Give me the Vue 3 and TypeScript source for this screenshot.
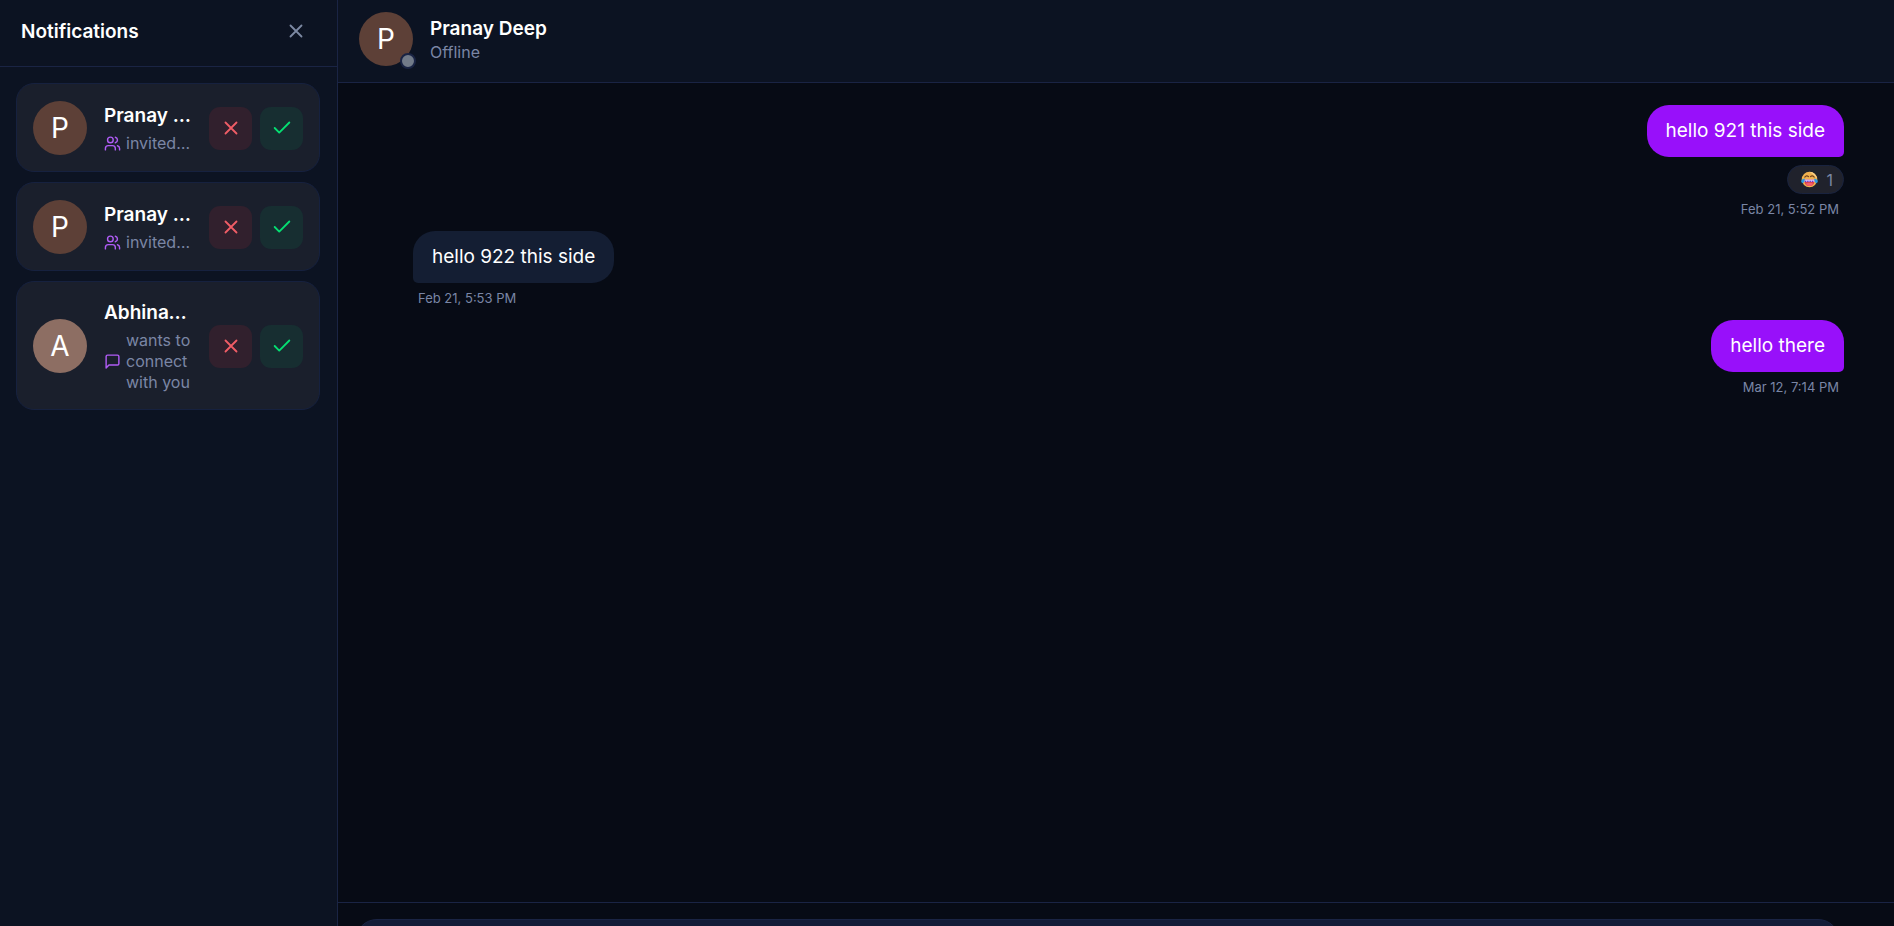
<script setup lang="ts">
import { ref } from 'vue'

interface Invite {
  id: number
  name: string
  text: string
  kind: 'group' | 'direct'
  tone: 'dark' | 'light'
}

interface Message {
  id: number
  text: string
  time: string
  mine: boolean
  reactions?: number
}

const invites = ref<Invite[]>([
  { id: 1, name: 'Pranay Deep', text: 'invited you', kind: 'group', tone: 'dark' },
  { id: 2, name: 'Pranay Deep', text: 'invited you', kind: 'group', tone: 'dark' },
  { id: 3, name: 'Abhinav Deep', text: 'wants to connect with you', kind: 'direct', tone: 'light' },
])

const messages = ref<Message[]>([
  { id: 1, text: 'hello 921 this side', time: 'Feb 21, 5:52 PM', mine: true, reactions: 1 },
  { id: 2, text: 'hello 922 this side', time: 'Feb 21, 5:53 PM', mine: false },
  { id: 3, text: 'hello there', time: 'Mar 12, 7:14 PM', mine: true },
])

const draft = ref('')
</script>

<template>
  <div class="app">
    <aside class="sidebar">
      <header class="sidebar-head">
        <h2>Notifications</h2>
        <button class="close" type="button" aria-label="Close">
          <svg class="icon" viewBox="0 0 24 24"><path d="M18 6 6 18M6 6l12 12" /></svg>
        </button>
      </header>
      <ul class="invites">
        <li v-for="item in invites" :key="item.id" class="card">
          <span class="avatar" :class="item.tone">{{ item.name.charAt(0) }}</span>
          <div class="info">
            <h3 class="name">{{ item.name }}</h3>
            <p class="detail" :class="item.kind">
              <svg v-if="item.kind === 'group'" class="kind-icon" viewBox="0 0 24 24">
                <path d="M16 21v-2a4 4 0 0 0-4-4H6a4 4 0 0 0-4 4v2" />
                <circle cx="9" cy="7" r="4" />
                <path d="M22 21v-2a4 4 0 0 0-3-3.870" />
                <path d="M16 3.130a4 4 0 0 1 0 7.750" />
              </svg>
              <svg v-else class="kind-icon" viewBox="0 0 24 24">
                <path d="M21 15a2 2 0 0 1-2 2H7l-4 4V5a2 2 0 0 1 2-2h14a2 2 0 0 1 2 2z" />
              </svg>
              <span>{{ item.text }}</span>
            </p>
          </div>
          <div class="actions">
            <button class="decline" type="button" aria-label="Decline">
              <svg class="icon" viewBox="0 0 24 24"><path d="M18 6 6 18M6 6l12 12" /></svg>
            </button>
            <button class="accept" type="button" aria-label="Accept">
              <svg class="icon" viewBox="0 0 24 24"><path d="M20 6 9 17l-5-5" /></svg>
            </button>
          </div>
        </li>
      </ul>
    </aside>

    <main class="chat">
      <header class="chat-head">
        <div class="presence">
          <span class="avatar dark">P</span>
          <span class="status-dot"></span>
        </div>
        <div>
          <h1 class="name">Pranay Deep</h1>
          <p class="status">Offline</p>
        </div>
      </header>

      <section class="messages">
        <article v-for="m in messages" :key="m.id" class="message" :class="{ mine: m.mine }">
          <p class="bubble">{{ m.text }}</p>
          <button v-if="m.reactions" class="reaction" type="button">
            <svg class="emoji" viewBox="0 0 36 36" aria-label="Tears of joy">
              <circle cx="18" cy="18" r="16.500" fill="#f0b04f" />
              <path d="M18 1.500A16.500 16.500 0 0 1 34 16L26 8z" fill="#f7cf86" />
              <path d="M8 13q4-5 8-1M20 12q4-4 8 1" fill="none" stroke="#70431f" stroke-width="2.400" stroke-linecap="round" />
              <path d="M7 18h22c0 9-4 14-11 14S7 27 7 18z" fill="#d9414e" />
              <path d="M7 18h22v5H7z" fill="#d8c5f5" />
              <path d="M8 22h20" stroke="#7131c9" stroke-width="2.500" stroke-dasharray="3 2" />
              <path d="M10 27q8-4 16 0-3 5-8 5t-8-5z" fill="#f5606b" />
              <path d="M8 16C2 17-1 20 1 24s7 1 7-8zM28 16c6 1 9 4 7 8s-7 1-7-8z" fill="#279be0" />
            </svg>
            <span>{{ m.reactions }}</span>
          </button>
          <time class="time">{{ m.time }}</time>
        </article>
      </section>

      <form class="composer" @submit.prevent>
        <input v-model="draft" type="text" aria-label="Message" />
        <button class="send" type="submit" aria-label="Send"></button>
      </form>
    </main>
  </div>
</template>

<style>
html,
body {
  background: #070b15;
  overflow: hidden;
}
</style>

<style scoped>
.app {
  display: flex;
  height: 100vh;
  overflow: hidden;
  background: #070b15;
  color: #fff;
  font-family: Inter, 'Liberation Sans', sans-serif;
  font-size: 18px;
}
h1, h2, h3, p, ul {
  margin: 0;
  padding: 0;
}
button {
  border: 0;
  padding: 0;
  font: inherit;
  cursor: pointer;
  display: flex;
  align-items: center;
  justify-content: center;
}
.icon {
  width: 22px;
  height: 22px;
  fill: none;
  stroke: currentColor;
  stroke-width: 2;
  stroke-linecap: round;
  stroke-linejoin: round;
}
.sidebar {
  box-sizing: border-box;
  flex: 0 0 338px;
  min-width: 0;
  background: #0c1322;
  border-right: 1px solid #1a2444;
}
.sidebar-head {
  box-sizing: border-box;
  display: flex;
  align-items: center;
  justify-content: space-between;
  height: 67px;
  padding: 0 21px 4px;
  border-bottom: 1px solid #1a2444;
}
.sidebar-head h2 {
  font-size: 19px;
  font-weight: 600;
}
.close {
  width: 40px;
  height: 40px;
  background: none;
  color: #7c89a3;
}
.invites {
  list-style: none;
  display: flex;
  flex-direction: column;
  gap: 10px;
  padding: 16px 17px 16px 16px;
}
.card {
  display: flex;
  align-items: center;
  gap: 17px;
  padding: 17px 16px 16px;
  background: #1a1f2c;
  border: 1px solid #16213f;
  border-radius: 18px;
}
.avatar {
  flex: none;
  display: flex;
  align-items: center;
  justify-content: center;
  width: 54px;
  height: 54px;
  border-radius: 50%;
  font-size: 28px;
}
.avatar.dark {
  background: #5d4037;
}
.avatar.light {
  background: #8d6e63;
}
.info {
  flex: 1;
  min-width: 0;
}
.name {
  font-size: 19px;
  font-weight: 600;
  line-height: 27px;
  white-space: nowrap;
  overflow: hidden;
  text-overflow: ellipsis;
}
.detail {
  display: flex;
  align-items: center;
  gap: 5px;
  font-size: 16px;
  line-height: 21px;
  color: #7a86a5;
}
.info .detail {
  margin-top: 4px;
}
.detail span {
  min-width: 0;
}
.detail.group span {
  white-space: nowrap;
  overflow: hidden;
  text-overflow: ellipsis;
}
.kind-icon {
  flex: none;
  width: 17px;
  height: 17px;
  fill: none;
  stroke: #b05cf5;
  stroke-width: 2;
  stroke-linecap: round;
  stroke-linejoin: round;
}
.actions {
  display: flex;
  gap: 8px;
}
.actions button {
  width: 43px;
  height: 43px;
  border-radius: 11px;
}
.actions .decline {
  background: #31202d;
  color: #f05d66;
}
.actions .accept {
  background: #172e31;
  color: #05df72;
}
.chat {
  flex: 1;
  min-width: 0;
  display: flex;
  flex-direction: column;
  height: calc(100vh + 65px);
}
.chat-head {
  display: flex;
  align-items: center;
  gap: 17px;
  padding: 12px 21px 16px;
  background: #0c1322;
  border-bottom: 1px solid #1a2444;
}
.presence {
  position: relative;
}
.status-dot {
  position: absolute;
  right: -3px;
  bottom: -3px;
  width: 12px;
  height: 12px;
  border: 2px solid #1a2444;
  border-radius: 50%;
  background: #727b89;
}
.status {
  font-size: 16px;
  line-height: 21px;
  color: #7a86a5;
}
.messages {
  flex: 1;
  display: flex;
  flex-direction: column;
  gap: 13px;
  padding: 22px 50px 22px 75px;
}
.message {
  display: flex;
  flex-direction: column;
  align-items: flex-start;
}
.message.mine {
  align-items: flex-end;
}
.bubble {
  padding: 12px 19px;
  line-height: 28px;
  font-size: 19px;
  background: #141e33;
  border-radius: 22px 22px 22px 5px;
}
.mine .bubble {
  background: #9810fa;
  border-radius: 22px 22px 5px 22px;
}
.reaction {
  box-sizing: border-box;
  height: 29px;
  margin-top: 8px;
  padding: 0 10px 0 13px;
  gap: 8px;
  border: 1px solid #19233f;
  border-radius: 15px;
  background: #20222c;
  color: #7a86a5;
  font-size: 16px;
}
.emoji {
  width: 17px;
  height: 17px;
}
.time {
  margin-top: 6px;
  padding: 0 5px;
  font-size: 13px;
  line-height: 18px;
  color: #7a86a5;
}
.composer {
  display: flex;
  align-items: flex-start;
  gap: 22px;
  padding: 16px 0 18px 17px;
  border-top: 1px solid #1a2444;
}
.composer input {
  box-sizing: border-box;
  flex: 1;
  min-width: 0;
  height: 54px;
  padding: 0 22px;
  border: 1px solid #1a2444;
  border-radius: 22px;
  background: #141d38;
  color: #fff;
  font: inherit;
}
.send {
  width: 32px;
  height: 40px;
  margin-top: 7px;
  border-radius: 11px;
  background: #0a0f1c;
}
</style>
